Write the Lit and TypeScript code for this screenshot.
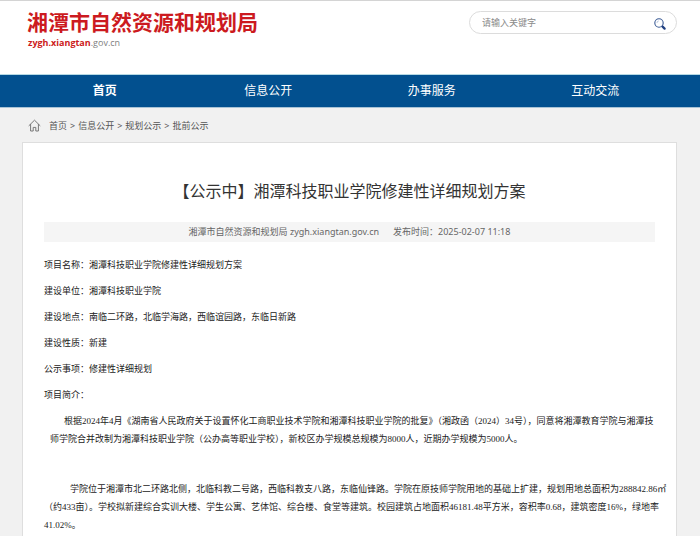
import { LitElement, html, css } from "lit";
import { customElement, state } from "lit/decorators.js";
import { classMap } from "lit/directives/class-map.js";

const NAV = ["首页", "信息公开", "办事服务", "互动交流"];
const CRUMBS = ["首页", "信息公开", "规划公示", "批前公示"];
const FACTS = [
  "项目名称：湘潭科技职业学院修建性详细规划方案",
  "建设单位：湘潭科技职业学院",
  "建设地点：南临二环路，北临学海路，西临谊园路，东临日新路",
  "建设性质：新建",
  "公示事项：修建性详细规划",
  "项目简介：",
];

@customElement("site-header")
class SiteHeader extends LitElement {
  @state() private keyword = "";

  static styles = css`
    :host {
      display: block;
      background: #fff;
      border-top: 1px solid #d4d4d4;
    }
    .bar {
      display: flex;
      justify-content: space-between;
      align-items: flex-start;
      box-sizing: border-box;
      min-height: 73px;
      padding: 6px 23px 0 27px;
    }
    .brand {
      color: #cc1a20;
      text-decoration: none;
      font-weight: 700;
    }
    .name {
      display: block;
      font-size: 21px;
      line-height: 30px;
    }
    .domain {
      display: block;
      font-size: 9px;
      line-height: 12px;
      padding-left: 1px;
      font-family: "Open Sans", "Noto Sans", sans-serif;
    }
    .suffix {
      color: #808080;
      font-weight: 400;
    }
    .search {
      display: flex;
      align-items: center;
      box-sizing: border-box;
      width: 208px;
      height: 23px;
      margin-top: 4px;
      padding: 0 10px 0 12px;
      border: 1px solid #dcdcdc;
      border-radius: 12px;
      background: #fff;
    }
    .field {
      flex: 1;
      min-width: 0;
      padding: 0;
      border: 0;
      outline: 0;
      background: none;
      font: inherit;
      font-size: 9px;
      color: #555;
    }
    .field::placeholder {
      color: #8a8a8a;
      opacity: 1;
    }
    .go {
      display: flex;
      padding: 2px 0 0;
      border: 0;
      background: none;
      cursor: pointer;
    }
  `;

  render() {
    return html`
      <header class="bar">
        <a class="brand" href="#">
          <span class="name">湘潭市自然资源和规划局</span>
          <span class="domain">zygh.xiangtan<span class="suffix">.gov.cn</span></span>
        </a>
        <form class="search" role="search" @submit=${(e: Event) => e.preventDefault()}>
          <input
            class="field"
            type="text"
            aria-label="请输入关键字"
            placeholder="请输入关键字"
            .value=${this.keyword}
            @input=${(e: Event) => (this.keyword = (e.target as HTMLInputElement).value)}
          />
          <button class="go" type="submit" aria-label="搜索">
            <svg width="12" height="12" viewBox="0 0 12 12" fill="none">
              <circle cx="5" cy="5" r="4.2" stroke="#3a5a94" stroke-width="1.1" />
              <path d="M2.9 5a2.2 2.2 0 0 1 1.9-2.1" stroke="#9fb2d2" stroke-width=".7" />
              <path d="M8.6 8.6l2 2" stroke="#1f3f80" stroke-width="2.2" stroke-linecap="round" />
            </svg>
          </button>
        </form>
      </header>
    `;
  }
}

@customElement("site-nav")
class SiteNav extends LitElement {
  static styles = css`
    :host {
      display: block;
      background: #02508f;
      border-top: 1px solid #b5d9e4;
      border-bottom: 1px solid #a9c3d6;
    }
    .list {
      display: grid;
      grid-template-columns: repeat(4, 1fr);
      padding: 0 23px;
    }
    .item {
      color: #fff;
      font-size: 12px;
      line-height: 32px;
      text-align: center;
      text-decoration: none;
    }
    .active {
      font-weight: 700;
    }
  `;

  render() {
    return html`<nav class="list">
      ${NAV.map(
        (label, i) =>
          html`<a class=${classMap({ item: true, active: i === 0 })} href="#">${label}</a>`
      )}
    </nav>`;
  }
}

@customElement("bread-crumbs")
class BreadCrumbs extends LitElement {
  static styles = css`
    :host {
      display: block;
    }
    .trail {
      display: flex;
      align-items: center;
      gap: 3px;
      height: 34px;
      padding: 0 28px;
      font-size: 9px;
      color: #555;
    }
    .home {
      margin-right: 5px;
    }
    .crumb {
      color: inherit;
      text-decoration: none;
    }
  `;

  render() {
    return html`<nav class="trail" aria-label="当前位置">
      <svg class="home" width="13" height="13" viewBox="0 0 13 13" fill="none" stroke="#777"
        stroke-width="1" stroke-linejoin="round" stroke-linecap="round">
        <path d="M1 6.6L6.5 1.2 12 6.6M2.6 5.4V12h2.6V8.4h2.6V12h2.6V5.4" />
      </svg>
      ${CRUMBS.map(
        (label, i) => html`${i ? html`<span>&gt;</span>` : ""}<a class="crumb" href="#">${label}</a>`
      )}
    </nav>`;
  }
}

@customElement("notice-article")
class NoticeArticle extends LitElement {
  static styles = css`
    :host {
      display: block;
      background: #fff;
      border: 1px solid #dedede;
      border-bottom: 0;
      padding: 34px 21px 0;
    }
    .title {
      margin: 0;
      font-size: 16px;
      line-height: 28px;
      font-weight: 400;
      text-align: center;
      color: #333;
    }
    .meta {
      display: flex;
      justify-content: center;
      gap: 14px;
      margin-top: 17px;
      background: #f5f5f5;
      font-size: 9px;
      line-height: 20px;
      color: #666;
    }
    .body {
      display: flex;
      flex-direction: column;
      gap: 8px;
      margin-top: 14px;
      font-family: "Liberation Serif", "Noto Sans CJK SC", sans-serif;
      font-size: 9px;
      line-height: 18px;
      color: #222;
      white-space: nowrap;
    }
    .para {
      margin: 0;
    }
    .basis {
      padding-left: 6px;
      text-indent: 14px;
    }
    .site {
      margin-top: 24px;
      text-indent: 26px;
    }
  `;

  render() {
    return html`<article>
      <h1 class="title">【公示中】湘潭科技职业学院修建性详细规划方案</h1>
      <div class="meta">
        <span>湘潭市自然资源和规划局 zygh.xiangtan.gov.cn</span>
        <span>发布时间：<time datetime="2025-02-07T11:18">2025-02-07 11:18</time></span>
      </div>
      <div class="body">
        ${FACTS.map((fact) => html`<p class="para">${fact}</p>`)}
        <p class="para basis">根据2024年4月《湖南省人民政府关于设置怀化工商职业技术学院和湘潭科技职业学院的批复》（湘政函（2024）34号），同意将湘潭教育学院与湘潭技<br />师学院合并改制为湘潭科技职业学院（公办高等职业学校），新校区办学规模总规模为8000人，近期办学规模为5000人。</p>
        <p class="para site">学院位于湘潭市北二环路北侧，北临科教二号路，西临科教支八路，东临仙锋路。学院在原技师学院用地的基础上扩建，规划用地总面积为288842.86㎡<br />（约433亩）。学校拟新建综合实训大楼、学生公寓、艺体馆、综合楼、食堂等建筑。校园建筑占地面积46181.48平方米，容积率0.68，建筑密度16%，绿地率<br />41.02%。</p>
      </div>
    </article>`;
  }
}

@customElement("app-root")
class AppRoot extends LitElement {
  static styles = css`
    :host {
      display: flex;
      flex-direction: column;
      min-height: 100vh;
      background: #f1f1f1;
      font-family: "Noto Sans", "Noto Sans CJK SC", sans-serif;
    }
    .article {
      flex: 1;
      margin: 0 23px 0 22px;
    }
  `;

  render() {
    return html`
      <site-header></site-header>
      <site-nav></site-nav>
      <bread-crumbs></bread-crumbs>
      <notice-article class="article"></notice-article>
    `;
  }
}
